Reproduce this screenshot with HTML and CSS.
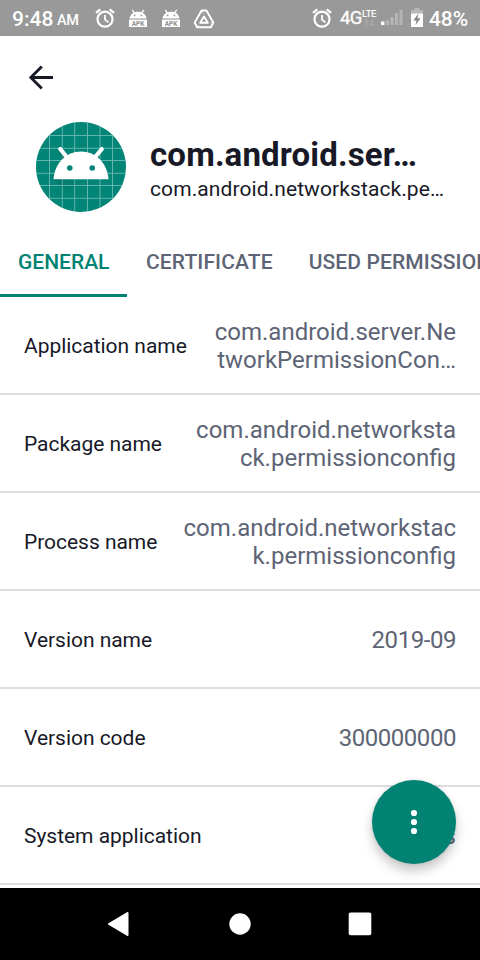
FILE: index.html
```html
<!DOCTYPE html>
<html lang="en">
<head>
<meta charset="utf-8">
<title>App details</title>
<link rel="stylesheet" href="styles.css">
</head>
<body>
<svg class="defs" width="0" height="0" aria-hidden="true">
  <symbol id="alarm" viewBox="0 0 20 20">
    <circle cx="10" cy="11.2" r="7.5" fill="none" stroke="currentColor" stroke-width="2.2"/>
    <path d="M10 7v4.600l3.400 2.800" fill="none" stroke="currentColor" stroke-width="1.800"/>
    <path d="M1 4.900 5.300 1.300M14.700 1.300 19 4.900" stroke="currentColor" stroke-width="2.200"/>
  </symbol>
  <symbol id="apk" viewBox="0 0 18 19">
    <path d="M.6 9.600C1 5 4.500 2.700 9 2.700s8 2.300 8.400 6.900z" fill="currentColor"/>
    <path d="M3.300.8 5.600 4.300M14.700.8 12.400 4.300" stroke="currentColor" stroke-width="1.300"/>
    <circle cx="5.600" cy="6.400" r=".9" fill="#999"/><circle cx="12.400" cy="6.400" r=".9" fill="#999"/>
    <path d="M0 10.600h18V18H0z" fill="currentColor"/>
    <text x="9" y="17" text-anchor="middle" textLength="12.500" lengthAdjust="spacingAndGlyphs" class="apk-text">APK</text>
  </symbol>
</svg>
<div class="screen">
  <header class="status">
    <span class="time">9:48</span><span class="ampm">AM</span>
    <svg class="alarm-left" width="20" height="20"><use href="#alarm"/></svg>
    <svg class="apk-icon" width="18" height="19"><use href="#apk"/></svg>
    <svg class="apk-icon second" width="18" height="19"><use href="#apk"/></svg>
    <svg class="tri" width="22" height="20" viewBox="0 0 22 20" fill="none" stroke="currentColor">
      <path d="M8.600 1.500h4.800l6.900 12-2.400 4.700H4.100l-2.400-4.700z" stroke-width="1.900" stroke-linejoin="round"/>
      <path d="M11 7.600 14.800 13.800H7.200z" stroke-width="2" stroke-linejoin="round"/>
      <path d="m8.600 1.500 2.400 3.800M20.300 13.500l-3 .5M4.100 18.200l2-2.500" stroke-width=".7" opacity=".7"/>
    </svg>
    <svg class="alarm-right" width="20" height="20"><use href="#alarm"/></svg>
    <span class="net">4G</span>
    <span class="lte"><span class="lte-text">LTE</span>
      <svg width="11" height="8" viewBox="0 0 11 8" fill="none" stroke="#aeaeae" stroke-width="1"><path d="M2.500 8V1M.3 3.200 2.500 1l2.200 2.200M8.300 0v7M6.100 4.800 8.300 7l2.200-2.200"/></svg>
    </span>
    <svg class="signal" width="22" height="16" viewBox="0 0 22 16">
      <path d="M0 12.500h3.500V16H0z" fill="#fff"/>
      <path d="M5 11h3v5H5zM9.500 8h3v8h-3zM14 4h3v12h-3zM18.500 1h3v15h-3z" fill="#b5b5b5"/>
    </svg>
    <svg class="battery" width="12" height="19" viewBox="0 0 12 19">
      <path d="M3.500 0h5v2H12v9H0V2h3.500z" fill="#b8b8b8"/>
      <path d="M0 5.500h12V19H0z" fill="#fff"/>
      <path d="M7.400 5.500 2.300 12.500h3.100L4.600 17l5-6.700H6.600z" fill="#888"/>
    </svg>
    <span class="pct">48%</span>
  </header>

  <div class="toolbar">
    <svg width="26" height="26" viewBox="0 0 26 26" fill="none" stroke="#171927" stroke-width="2.800"><path d="M25 13.500H3M13.800 2.500 2.800 13.500l11 11"/></svg>
  </div>

  <section class="app">
    <svg class="app-icon" width="90" height="90" viewBox="0 0 90 90">
      <defs>
        <clipPath id="round"><circle cx="45" cy="45" r="45"/></clipPath>
        <linearGradient id="shade" x1="0" y1="0" x2="1" y2="1"><stop offset="0" stop-opacity=".2"/><stop offset=".5" stop-opacity="0"/></linearGradient>
      </defs>
      <g clip-path="url(#round)">
        <path d="M0 0h90v90H0z" fill="#028576"/>
        <path d="M13.500 0v90M26.300 0v90M38.700 0v90M51.500 0v90M64 0v90M76.500 0v90M0 13.500h90M0 26.300h90M0 38.500h90M0 51.300h90M0 63.500h90M0 76.300h90" stroke="#6bb9af" stroke-width=".9"/>
        <path d="M17.500 57 50.500 90H90V74L72.500 57zM22 27l10 10-4 4z" fill="url(#shade)"/>
      </g>
      <path d="M17.500 57.300C18.600 41.500 30 29.500 45 29.500s26.400 12 27.500 27.800z" fill="#fff"/>
      <path d="m24.200 27 7 8.500M65.800 27l-7 8.500" stroke="#fff" stroke-width="4.200" stroke-linecap="round"/>
      <circle cx="33.800" cy="46" r="2.800" fill="#028576"/><circle cx="56.200" cy="46" r="2.800" fill="#028576"/>
    </svg>
    <div class="app-text">
      <h1>com.android.ser…</h1>
      <p>com.android.networkstack.pe…</p>
    </div>
  </section>

  <nav class="tabs">
    <span class="tab active">GENERAL</span>
    <span class="tab">CERTIFICATE</span>
    <span class="tab">USED PERMISSIONS</span>
  </nav>

  <main class="list">
    <div class="row"><span class="label">Application name</span><span class="value">com.android.server.Ne<br>tworkPermissionCon…</span></div>
    <div class="row"><span class="label">Package name</span><span class="value">com.android.networksta<br>ck.permissionconfig</span></div>
    <div class="row"><span class="label">Process name</span><span class="value">com.android.networkstac<br>k.permissionconfig</span></div>
    <div class="row"><span class="label">Version name</span><span class="value digits">2019-09</span></div>
    <div class="row"><span class="label">Version code</span><span class="value digits">300000000</span></div>
    <div class="row"><span class="label">System application</span><span class="value">Yes</span></div>
  </main>

  <footer class="navbar">
    <svg width="24" height="26" viewBox="0 0 24 26"><path d="M2 13 20.500 2v22z" fill="#fff" stroke="#fff" stroke-width="2" stroke-linejoin="round"/></svg>
    <svg width="24" height="26" viewBox="0 0 24 26"><circle cx="12" cy="13" r="10.700" fill="#fff"/></svg>
    <svg width="24" height="26" viewBox="0 0 24 26"><rect x=".7" y="1.500" width="22.600" height="22.800" rx="2" fill="#fff"/></svg>
  </footer>

  <div class="fab"><svg width="8" height="26" viewBox="0 0 8 26" fill="#fff"><circle cx="4" cy="4" r="3.100"/><circle cx="4" cy="13" r="3.100"/><circle cx="4" cy="22" r="3.100"/></svg></div>
</div>
</body>
</html>
```
FILE: styles.css
```css
* { box-sizing: border-box; }
body { margin: 0; font-family: Roboto, sans-serif; background: #fff; }
svg { display: block; flex: none; }
.defs { position: absolute; }
.screen {
  position: relative;
  width: 480px;
  height: 960px;
  overflow: hidden;
  display: flex;
  flex-direction: column;
  color: #171927;
}

.status {
  height: 36px;
  flex: none;
  display: flex;
  align-items: flex-start;
  padding-top: 8px;
  background: #999;
  color: #fff;
  white-space: nowrap;
}
.time { width: 43px; margin-left: 12px; font-size: 21px; line-height: 22px; font-weight: 500; }
.ampm { width: 23px; margin-left: 2px; font-size: 14.5px; line-height: 26px; font-weight: 500; letter-spacing: -.3px; }
.alarm-left { margin-left: 15px; }
.apk-icon { margin: 1px 0 0 14px; }
.apk-icon.second { margin-left: 15px; }
.apk-text { font: 700 6.5px Roboto, sans-serif; fill: #8d8d8d; }
.tri { margin: 1px 0 0 13px; }
.alarm-right { margin-left: 97px; }
.net { width: 22px; margin-left: 8px; font-size: 18.5px; line-height: 20px; letter-spacing: -.7px; -webkit-text-stroke: .3px #fff; }
.lte { width: 17px; }
.lte-text { display: block; font-size: 9.5px; line-height: 11px; letter-spacing: -.2px; -webkit-text-stroke: .2px #fff; }
.lte svg { margin-left: 2px; }
.signal { margin: 1px 0 0 2px; }
.battery { margin-left: 8px; }
.pct { margin-left: 6px; font-size: 21px; line-height: 22px; font-weight: 500; letter-spacing: -.1px; }

.toolbar { height: 84px; flex: none; padding: 28px 0 0 28px; }

.app { height: 107px; flex: none; display: flex; padding: 2px 0 0 36px; }
.app-text { margin-left: 24px; white-space: nowrap; }
h1 { margin: 14px 0 0; font-size: 33px; line-height: 38px; font-weight: 700; letter-spacing: .16px; }
p { margin: 3px 0 0; font-size: 21px; line-height: 25px; letter-spacing: .09px; }

.tabs { height: 70px; flex: none; display: flex; white-space: nowrap; }
.tab {
  flex: none;
  padding: 22px 18px 0;
  font-size: 21px;
  line-height: 26px;
  font-weight: 500;
  letter-spacing: .12px;
  color: #5d6475;
}
.tab.active { letter-spacing: 0; width: 127px; margin-right: 1px; color: #018273; border-bottom: 3px solid #018273; }

.list { flex: 1; overflow: hidden; }
.row {
  height: 98px;
  display: flex;
  align-items: center;
  justify-content: space-between;
  padding: 2px 24px 0;
  border-bottom: 2px solid #dedede;
}
.label { font-size: 21px; letter-spacing: -.03px; }
.value { font-size: 24px; line-height: 28px; text-align: right; color: #5d6475; }
.digits { letter-spacing: -.45px; margin-right: 0; }

.navbar {
  height: 72px;
  flex: none;
  display: flex;
  align-items: center;
  justify-content: space-between;
  padding: 0 108px 0 107px;
  background: #000;
}

.fab {
  position: absolute;
  right: 24px;
  bottom: 96px;
  width: 84px;
  height: 84px;
  border-radius: 50%;
  display: flex;
  align-items: center;
  justify-content: center;
  background: #018273;
  box-shadow: 0 7px 12px rgba(0, 0, 0, .22), 0 0 3px rgba(0, 0, 0, .12);
}
```
